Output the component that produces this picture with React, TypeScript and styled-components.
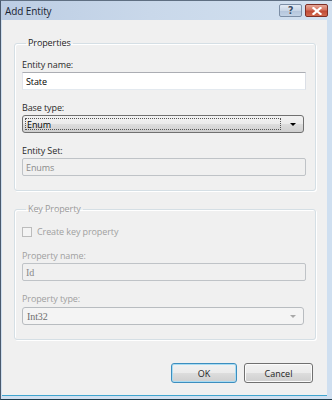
import React, { useState } from 'react';
import styled, { createGlobalStyle } from 'styled-components';

const GlobalStyle = createGlobalStyle`
  html, body {
    margin: 0;
    padding: 0;
    background: #ffffff;
  }
  * {
    box-sizing: border-box;
  }
`;

const FONT = `"Open Sans", "Noto Sans", "Liberation Sans", sans-serif`;

const App: React.FC = () => {
  const [entityName, setEntityName] = useState('State');
  const [createKey, setCreateKey] = useState(false);

  return (
    <>
      <GlobalStyle />
      <Window>
        <TitleBar>
          <Title>Add Entity</Title>
          <CaptionButtons>
            <HelpButton>?</HelpButton>
            <CloseButton>
              <svg width="10" height="8" viewBox="0 0 10 8">
                <path d="M1.5 1 L8.5 7 M8.5 1 L1.5 7" stroke="#ffffff" strokeWidth="2.2" strokeLinecap="square" />
              </svg>
            </CloseButton>
          </CaptionButtons>
        </TitleBar>

        <Client>
          <GroupBox>
            <Legend>Properties</Legend>
            <Field>
              <Label>Entity name:</Label>
              <TextInput value={entityName} onChange={(e) => setEntityName(e.target.value)} />
            </Field>
            <Field $gap={12}>
              <Label>Base type:</Label>
              <ComboBox $narrow>
                <FocusRect>Enum</FocusRect>
                <Arrow />
              </ComboBox>
            </Field>
            <Field $gap={12}>
              <Label>Entity Set:</Label>
              <TextInput value="Enums" disabled readOnly />
            </Field>
          </GroupBox>

          <GroupBox $top={12} $bottom={14}>
            <Legend $disabled>Key Property</Legend>
            <CheckRow>
              <CheckBox type="checkbox" checked={createKey} disabled onChange={() => setCreateKey(!createKey)} />
              <CheckLabel>Create key property</CheckLabel>
            </CheckRow>
            <Field $gap={12}>
              <Label $disabled>Property name:</Label>
              <TextInput value="Id" disabled readOnly $serif />
            </Field>
            <Field $gap={12} $labelGap={2}>
              <Label $disabled>Property type:</Label>
              <ComboBox $disabled $narrow>
                <ComboText>Int32</ComboText>
                <Arrow $disabled />
              </ComboBox>
            </Field>
          </GroupBox>

          <Footer>
            <DialogButton $default>OK</DialogButton>
            <DialogButton $wide>Cancel</DialogButton>
          </Footer>
        </Client>
      </Window>
    </>
  );
};

export default App;

const Window = styled.div`
  width: 332px;
  height: 400px;
  display: flex;
  flex-direction: column;
  background: #cfdff0;
  border-left: 1px solid #4a5a6e;
  border-top: 1px solid #5f6f82;
  border-bottom: 1px solid #1f3a4a;
  font-family: ${FONT};
  font-size: 9px;
  letter-spacing: -0.1px;
  color: #1e1e1e;
  overflow: hidden;
`;

const TitleBar = styled.div`
  height: 19px;
  display: flex;
  align-items: center;
  justify-content: space-between;
  padding: 0 4px 0 4px;
  background: linear-gradient(to right, #bccde3 0%, #c9d8ea 45%, #d3e1f0 100%);
`;

const Title = styled.span`
  font-size: 10px;
  color: #1a2433;
`;

const CaptionButtons = styled.div`
  display: flex;
  gap: 3px;
  align-self: flex-start;
  margin-top: 3px;
`;

const HelpButton = styled.div`
  width: 23px;
  height: 13px;
  display: flex;
  align-items: center;
  justify-content: center;
  border: 1px solid #7d8fa6;
  border-radius: 2px;
  background: linear-gradient(to bottom, #e3ebf5 0%, #c9d6e6 50%, #b3c4da 51%, #c2d2e5 100%);
  color: #3c4e66;
  font-family: "DejaVu Sans", sans-serif;
  font-size: 10px;
  font-weight: bold;
  line-height: 1;
  text-shadow: 0 0 1px #ffffff;
`;

const CloseButton = styled.div`
  width: 23px;
  height: 13px;
  display: flex;
  align-items: center;
  justify-content: center;
  border: 1px solid #7e2f26;
  border-radius: 2px;
  background: linear-gradient(to bottom, #e5a798 0%, #d5735f 45%, #c04a36 55%, #d26a4f 100%);
`;

const Client = styled.div`
  flex: 1;
  display: flex;
  flex-direction: column;
  margin: 0 5px 3px 1px;
  padding: 17px 11px 0 12px;
  background: #f0f0f0;
  border-bottom: 1px solid #3fa5cf;
`;

const GroupBox = styled.fieldset<{ $top?: number; $bottom?: number }>`
  margin: ${({ $top }) => $top ?? 0}px 0 0 0;
  padding: 10px 9px ${({ $bottom }) => $bottom ?? 14}px 7px;
  border: 1px solid #d5dfe5;
  border-radius: 3px;
  box-shadow: inset 1px 1px 0 #ffffff, 1px 1px 0 #ffffff;
  display: flex;
  flex-direction: column;
  min-width: 0;
`;

const Legend = styled.legend<{ $disabled?: boolean }>`
  padding: 0 2px;
  margin-left: 4px;
  line-height: 12px;
  color: ${({ $disabled }) => ($disabled ? '#9a9a9a' : '#1e1e1e')};
`;

const Field = styled.div<{ $gap?: number; $labelGap?: number }>`
  display: flex;
  flex-direction: column;
  gap: ${({ $labelGap }) => $labelGap ?? 1}px;
  margin-top: ${({ $gap }) => $gap ?? 0}px;
`;

const Label = styled.label<{ $disabled?: boolean }>`
  line-height: 12px;
  color: ${({ $disabled }) => ($disabled ? '#a0a0a0' : '#2a2a2a')};
`;

const TextInput = styled.input<{ $serif?: boolean }>`
  width: 100%;
  height: 18px;
  padding: 0 3px;
  border: 1px solid #abadb3;
  border-color: #abadb3 #dbdfe6 #e3e9ef #e2e3ea;
  border-radius: 0;
  background: #ffffff;
  font-family: ${({ $serif }) => ($serif ? `"Liberation Serif", serif` : FONT)};
  font-size: ${({ $serif }) => ($serif ? 10 : 9)}px;
  letter-spacing: -0.1px;
  color: #000000;
  outline: none;

  &:disabled {
    background: #f0f0f0;
    border: 1px solid #bfc3c7;
    border-radius: 2px;
    color: #8a8a8a;
  }
`;

const ComboBox = styled.div<{ $disabled?: boolean; $narrow?: boolean }>`
  width: ${({ $narrow }) => ($narrow ? 'calc(100% - 2px)' : '100%')};
  height: 18px;
  display: flex;
  align-items: center;
  padding: 2px 3px 2px 2px;
  border: 1px solid ${({ $disabled }) => ($disabled ? '#b8bcc0' : '#707070')};
  border-radius: 3px;
  background: ${({ $disabled }) =>
    $disabled ? '#f4f4f4' : 'linear-gradient(to bottom, #f2f2f2 0%, #ebebeb 50%, #dddddd 51%, #cfcfcf 100%)'};
  color: ${({ $disabled }) => ($disabled ? '#6d6d6d' : '#000000')};
`;

const FocusRect = styled.div`
  flex: 1;
  height: 100%;
  display: flex;
  align-items: center;
  padding-left: 1px;
  border: 1px dotted #555555;
  line-height: 1;
`;

const ComboText = styled.div`
  flex: 1;
  padding-left: 2px;
  font-family: "Liberation Serif", serif;
  font-size: 10px;
`;

const Arrow = styled.span<{ $disabled?: boolean }>`
  width: 0;
  height: 0;
  margin: 0 4px 0 9px;
  border-left: 3px solid transparent;
  border-right: 3px solid transparent;
  border-top: 3px solid ${({ $disabled }) => ($disabled ? '#a8a8a8' : '#000000')};
`;

const CheckRow = styled.div`
  display: flex;
  align-items: center;
  gap: 5px;
  height: 12px;
  margin-top: 1px;
`;

const CheckBox = styled.input`
  appearance: none;
  width: 10px;
  height: 10px;
  margin: 0;
  border: 1px solid #bcbcbc;
  background: #f4f4f4;
`;

const CheckLabel = styled.span`
  color: #a0a0a0;
  line-height: 12px;
`;

const Footer = styled.div`
  display: flex;
  justify-content: flex-end;
  gap: 7px;
  margin-top: 23px;
  padding-right: 3px;
`;

const DialogButton = styled.button<{ $default?: boolean; $wide?: boolean }>`
  width: ${({ $wide }) => ($wide ? 69 : 66)}px;
  height: 20px;
  padding: 0;
  border: 1px solid ${({ $default }) => ($default ? '#3c8ebf' : '#707070')};
  border-radius: 3px;
  background: linear-gradient(to bottom, #f2f2f2 0%, #ebebeb 50%, #dddddd 51%, #cfcfcf 100%);
  box-shadow: ${({ $default }) => ($default ? 'inset 0 0 0 1px #a9dcf3' : 'inset 0 0 0 1px #fbfbfb')};
  font-family: ${FONT};
  font-size: 9px;
  color: #1e1e1e;
  cursor: pointer;
`;
